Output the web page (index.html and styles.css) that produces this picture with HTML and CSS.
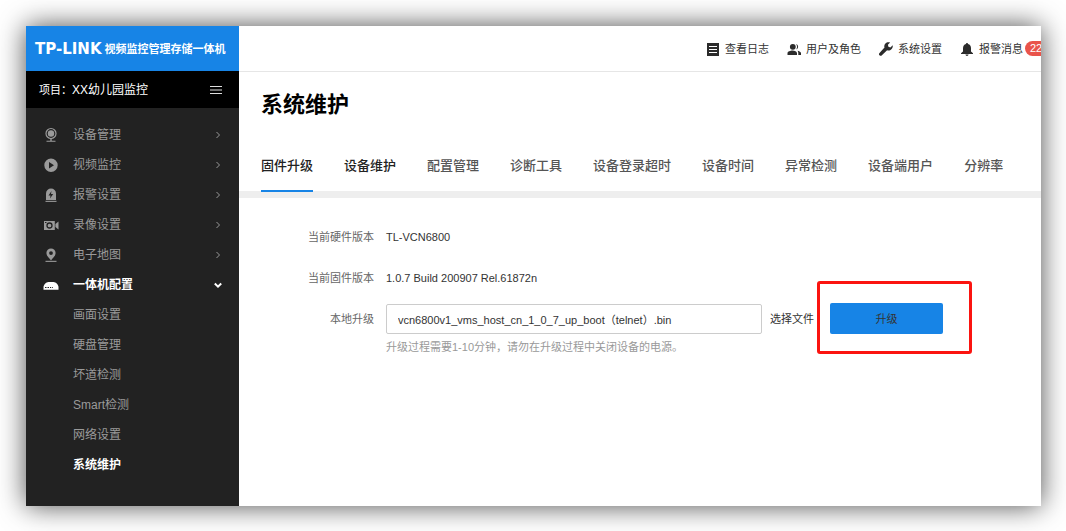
FILE: index.html
```html
<!DOCTYPE html>
<html lang="zh-CN">
<head>
<meta charset="utf-8">
<meta name="viewport" content="width=device-width, initial-scale=1">
<title>系统维护</title>
<link rel="stylesheet" href="styles.css">
</head>
<body>
<div class="app">
  <aside class="sidebar">
    <div class="brand"><span class="brand-mark">TP-LINK</span><span class="brand-name">视频监控管理存储一体机</span></div>
    <div class="project">
      <span>项目：</span><span class="project-name">XX幼儿园监控</span>
      <button class="burger" type="button" aria-label="菜单">
        <svg width="12" height="8" viewBox="0 0 12 8"><path d="M0 .5h12M0 4h12M0 7.500h12" stroke="#ddd" fill="none"/></svg>
      </button>
    </div>
    <nav class="menu">
      <a class="menu-item" href="#">
        <svg class="menu-icon" viewBox="0 0 16 16"><circle cx="8" cy="6.500" r="5" fill="none" stroke="#9a9a9a" stroke-width="1.200"/><circle cx="8" cy="6.500" r="3.200" fill="#9a9a9a"/><path d="M7.300 11h1.400v3H7.300zM3.500 13.700h9v1h-9z" fill="#9a9a9a"/></svg>
        <span>设备管理</span><svg class="arrow" viewBox="0 0 8 8"><path d="M2.500 1l3 3-3 3"/></svg>
      </a>
      <a class="menu-item" href="#">
        <svg class="menu-icon" viewBox="0 0 16 16"><path fill-rule="evenodd" d="M8 1.500a6.700 6.700 0 1 0 0 13.400a6.700 6.700 0 0 0 0-13.400zM6 5v6.400l5-3.200z" fill="#9a9a9a"/></svg>
        <span>视频监控</span><svg class="arrow" viewBox="0 0 8 8"><path d="M2.500 1l3 3-3 3"/></svg>
      </a>
      <a class="menu-item" href="#">
        <svg class="menu-icon" viewBox="0 0 16 16"><path fill-rule="evenodd" d="M3 13V6.500a5 5 0 0 1 10 0V13zM8.500 4L5.500 8.500h2L7 11.500l3.200-4.400H8z" fill="#9a9a9a"/><path d="M2.500 13.800h11v1.100h-11z" fill="#9a9a9a"/></svg>
        <span>报警设置</span><svg class="arrow" viewBox="0 0 8 8"><path d="M2.500 1l3 3-3 3"/></svg>
      </a>
      <a class="menu-item" href="#">
        <svg class="menu-icon" viewBox="0 0 16 16"><path d="M1 4h10.800v9H1zM12.400 7L15.500 4.500v8L12.400 10z" fill="#9a9a9a"/><circle cx="6.500" cy="8.500" r="2.500" fill="none" stroke="#222" stroke-width="1.300"/><path d="M2 5h1.500v1H2z" fill="#222"/></svg>
        <span>录像设置</span><svg class="arrow" viewBox="0 0 8 8"><path d="M2.500 1l3 3-3 3"/></svg>
      </a>
      <a class="menu-item" href="#">
        <svg class="menu-icon" viewBox="0 0 16 16"><path fill-rule="evenodd" d="M8 1.500a4.600 4.600 0 0 0-4.600 4.600C3.400 9 6.200 10.800 8 13.500c1.800-2.700 4.600-4.500 4.600-7.400A4.600 4.600 0 0 0 8 1.500zM8 4.200a1.900 1.900 0 1 1 0 3.800a1.900 1.900 0 0 1 0-3.800z" fill="#9a9a9a"/><path d="M2.500 13.800h11v1.100h-11z" fill="#9a9a9a"/></svg>
        <span>电子地图</span><svg class="arrow" viewBox="0 0 8 8"><path d="M2.500 1l3 3-3 3"/></svg>
      </a>
      <a class="menu-item is-active" href="#">
        <svg class="menu-icon" viewBox="0 0 16 16"><path d="M.5 12.800V10C.5 8 3 5 5.500 5h5c2.500 0 5 3 5 5v2.800z" fill="#fff"/><path d="M2 10.500h1.500M4.500 10.500H6M7 10.500h1.200M9 10.500h.8" stroke="#222"/></svg>
        <span>一体机配置</span><svg class="arrow" viewBox="0 0 8 8"><path d="M.8 2.500L4 5.700l3.200-3.200"/></svg>
      </a>
      <a class="menu-item menu-sub" href="#">画面设置</a>
      <a class="menu-item menu-sub" href="#">硬盘管理</a>
      <a class="menu-item menu-sub" href="#">坏道检测</a>
      <a class="menu-item menu-sub" href="#">Smart检测</a>
      <a class="menu-item menu-sub" href="#">网络设置</a>
      <a class="menu-item menu-sub is-active" href="#">系统维护</a>
    </nav>
  </aside>
  <main class="main">
    <header class="topbar">
      <a class="top-link" href="#"><svg class="top-icon" viewBox="0 0 14 14"><path d="M1 1h12v13H1z" fill="#2b2b2b"/><path d="M3 4.500h8M3 7.500h8M3 10.500h8" stroke="#fff"/></svg>查看日志</a>
      <a class="top-link" href="#"><svg class="top-icon" viewBox="0 0 14 14"><circle cx="5.800" cy="4.800" r="2.900" fill="#2b2b2b"/><path d="M.5 13v-1.800C.5 9.500 3.500 8.500 5.500 8.500s4.500 1 4.500 2.700V13zM9 2a2.900 2.900 0 0 1 0 5.600a4.500 4.500 0 0 0 0-5.600zM10.500 8.800c1.800.3 3.500 1.200 3.500 2.500V13h-2.700v-1.800c0-1-.3-1.800-.8-2.400z" fill="#2b2b2b"/></svg>用户及角色</a>
      <a class="top-link" href="#"><svg class="top-icon" viewBox="0 0 14 14"><path d="M13.700 3.200l-2.300 2.200-2-.6-.5-2L11.100.6C9.500 0 7.600.2 6.400 1.500 5.300 2.600 5 4.200 5.500 5.600L.5 10.900c-.7.7-.7 1.700 0 2.400s1.700.7 2.400 0l5.200-5.100c1.500.5 3.200.2 4.300-1 1.200-1.100 1.600-2.600 1.300-4z" fill="#2b2b2b"/></svg>系统设置</a>
      <a class="top-link" href="#"><svg class="top-icon" viewBox="0 0 14 14"><path d="M7 1c.7 0 1 .5 1 1.100 2 .5 3 2.100 3 4.200v3.200l2 1.800v.8H1v-.8l2-1.800V6.300c0-2.100 1-3.700 3-4.200C6 1.500 6.300 1 7 1zM5.400 12.600h3.200c-.2.900-.8 1.400-1.600 1.400s-1.400-.5-1.600-1.400z" fill="#2b2b2b"/></svg>报警消息<span class="count"><span class="badge">22</span></span></a>
    </header>
    <h1 class="title">系统维护</h1>
    <nav class="tabs">
      <a class="tab is-current" href="#">固件升级</a>
      <a class="tab is-dark" href="#">设备维护</a>
      <a class="tab" href="#">配置管理</a>
      <a class="tab" href="#">诊断工具</a>
      <a class="tab" href="#">设备登录超时</a>
      <a class="tab" href="#">设备时间</a>
      <a class="tab" href="#">异常检测</a>
      <a class="tab" href="#">设备端用户</a>
      <a class="tab" href="#">分辨率</a>
    </nav>
    <form class="form">
      <span class="label">当前硬件版本</span>
      <span class="value">TL-VCN6800</span>
      <span class="label">当前固件版本</span>
      <span class="value">1.0.7 Build 200907 Rel.61872n</span>
      <label class="label" for="file">本地升级</label>
      <div class="upload">
        <input class="file" id="file" type="text" value="vcn6800v1_vms_host_cn_1_0_7_up_boot（telnet）.bin">
        <button class="choose" type="button">选择文件</button>
        <div class="highlight"><button class="upgrade" type="button">升级</button></div>
      </div>
      <p class="hint">升级过程需要1-10分钟，请勿在升级过程中关闭设备的电源。</p>
    </form>
  </main>
</div>
</body>
</html>
```
FILE: styles.css
```css
* {
  box-sizing: border-box;
}

body {
  margin: 0;
  padding: 26px 25px 25px 26px;
  background: #fff;
  color: #333;
  font: 11px/16px "Liberation Sans", "Noto Sans CJK SC", sans-serif;
}

a {
  color: inherit;
  text-decoration: none;
}

button,
input {
  margin: 0;
  font: inherit;
  color: inherit;
}

.app {
  display: flex;
  min-height: calc(100vh - 51px);
  background: #fff;
  box-shadow: 0 0 26px rgba(0, 0, 0, 0.7);
}

.sidebar {
  flex: 0 0 213px;
  background: #222;
}

.brand {
  display: flex;
  align-items: center;
  gap: 3px;
  height: 45px;
  padding-left: 9px;
  background: #1784e6;
  color: #fff;
  font-weight: bold;
  white-space: nowrap;
}

.brand-mark {
  font-family: "DejaVu Sans", sans-serif;
  font-size: 15px;
}

.project {
  display: flex;
  align-items: center;
  height: 37px;
  padding: 0 17px 0 13px;
  background: #000;
  color: #fff;
}

.project-name {
  flex: 1;
  font-size: 12px;
}

.burger {
  display: flex;
  padding: 0;
  border: 0;
  background: none;
}

.menu {
  display: flex;
  flex-direction: column;
  padding: 12px 17px 23px;
  color: #9a9a9a;
  font-size: 12px;
}

.menu-item {
  display: flex;
  align-items: center;
  height: 30px;
}

.menu-item span {
  flex: 1;
}

.menu-icon {
  width: 16px;
  height: 16px;
  margin-right: 14px;
}

.menu-sub {
  padding-left: 30px;
}

.menu-item.is-active {
  color: #fff;
  font-weight: bold;
}

.arrow {
  width: 8px;
  height: 8px;
  fill: none;
  stroke: #999;
}

.is-active .arrow {
  stroke: #fff;
  stroke-width: 2;
}

.main {
  flex: 1;
  min-width: 0;
}

.topbar {
  display: flex;
  justify-content: flex-end;
  align-items: center;
  gap: 18px;
  height: 46px;
  border-bottom: 1px solid #e6e6e6;
  overflow: hidden;
}

.top-link {
  display: flex;
  align-items: center;
  white-space: nowrap;
}

.top-icon {
  width: 14px;
  height: 14px;
  margin-right: 5px;
}

.count {
  width: 18px;
}

.badge {
  display: block;
  width: 24px;
  margin-left: 2px;
  padding-left: 5px;
  border-radius: 8px;
  background: #e9544b;
  color: #fff;
  line-height: 15px;
}

.title {
  margin: 16px 0 0 22px;
  color: #000;
  font-size: 22px;
  line-height: 34px;
}

.tabs {
  display: flex;
  gap: 31px;
  padding-left: 22px;
  border-bottom: 7px solid #eee;
  color: #555;
  font-size: 13px;
  font-weight: 500;
  white-space: nowrap;
}

.tab {
  height: 70px;
  margin-bottom: -1px;
  padding-top: 34px;
  line-height: 20px;
}

.is-dark {
  color: #222;
}

.is-current {
  border-bottom: 2px solid #1784e6;
  color: #222;
}

.form {
  display: grid;
  grid-template-columns: 135px 1fr;
  grid-template-rows: 41px 41px 41px auto;
  column-gap: 12px;
  align-items: center;
  padding: 18px 98px 24px 0;
}

.label {
  color: #666;
  text-align: right;
}

.upload {
  display: flex;
  align-items: center;
}

.file {
  flex: 1;
  min-width: 0;
  height: 30px;
  padding: 0 11px;
  border: 1px solid #ccc;
  border-radius: 2px;
  background: #fff;
}

.choose {
  margin: 0 16px 0 8px;
  padding: 0;
  border: 0;
  background: none;
}

.highlight {
  position: relative;
}

.highlight::after {
  content: "";
  position: absolute;
  inset: -22px -29px -20px -13px;
  border: 3px solid #fb1410;
  border-radius: 3px;
  pointer-events: none;
}

.upgrade {
  display: block;
  width: 113px;
  height: 31px;
  padding: 0;
  border: 0;
  border-radius: 2px;
  background: #1784e6;
}

.hint {
  grid-column: 2;
  margin: 0;
  color: #999;
}
```
